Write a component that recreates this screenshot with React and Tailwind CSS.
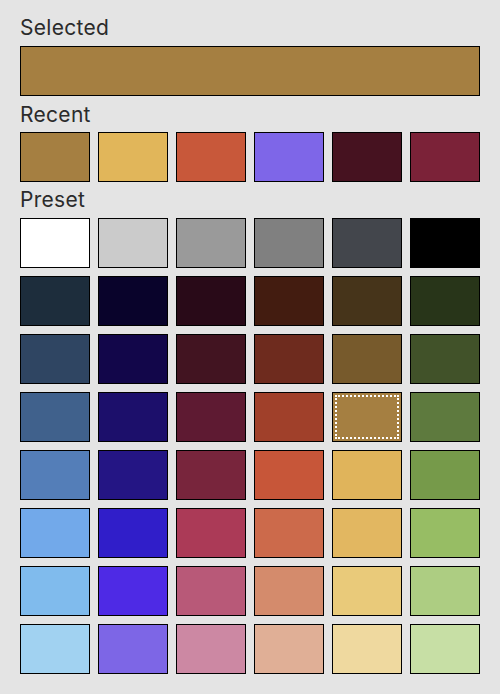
import React from 'react';

const recent = ['#a57f41', '#e1b65a', '#c8583a', '#7e66e8', '#461220', '#7b2238'];

const preset = [
  ['#ffffff', '#cbcbcb', '#9a9a9a', '#808080', '#43464c', '#000000'],
  ['#1d2d3c', '#09032b', '#290a18', '#431c10', '#46341a', '#283519'],
  ['#2f4562', '#12064a', '#421421', '#6e2b1e', '#775a2c', '#415229'],
  ['#40618c', '#1c0f6b', '#5e1a32', '#a0402a', '#a57f41', '#5e7a3e'],
  ['#547eb8', '#241584', '#78253c', '#c75639', '#e0b45b', '#769a4a'],
  ['#72a9ea', '#301ec9', '#ab3a57', '#cc6a4b', '#e2b761', '#97bd64'],
  ['#80bbed', '#4e2ae5', '#b85978', '#d48b6c', '#e9ca7a', '#adcd82'],
  ['#a1d2f1', '#7d66e6', '#cc88a3', '#e0af96', '#efd99f', '#c7dfa5'],
];

function Swatch({ color, selected }) {
  return (
    <div className="h-[50px] border border-black p-[2px]" style={{ backgroundColor: color }}>
      {selected && <div className="h-full w-full border-2 border-dotted border-white" />}
    </div>
  );
}

function Label({ children, className = '' }) {
  return (
    <div className={`h-6 text-[21px] leading-6 tracking-[0.3px] text-[#2b2b2b] ${className}`}>{children}</div>
  );
}

export default function App() {
  return (
    <div
      className="min-h-screen bg-[#e4e4e4] px-5 pt-4 pb-5"
      style={{ fontFamily: 'Inter, "Liberation Sans", sans-serif' }}
    >
      <Label className="mb-[6px]">Selected</Label>
      <div className="h-[50px] border border-black bg-[#a57f41]" />

      <Label className="mt-[7px] mb-[5px]">Recent</Label>
      <div className="grid grid-cols-6 gap-2">
        {recent.map((c, i) => (
          <Swatch key={i} color={c} />
        ))}
      </div>

      <Label className="mt-[6px] mb-[6px]">Preset</Label>
      <div className="grid grid-cols-6 gap-2">
        {preset.flat().map((c, i) => (
          <Swatch key={i} color={c} selected={i === 22} />
        ))}
      </div>
    </div>
  );
}
